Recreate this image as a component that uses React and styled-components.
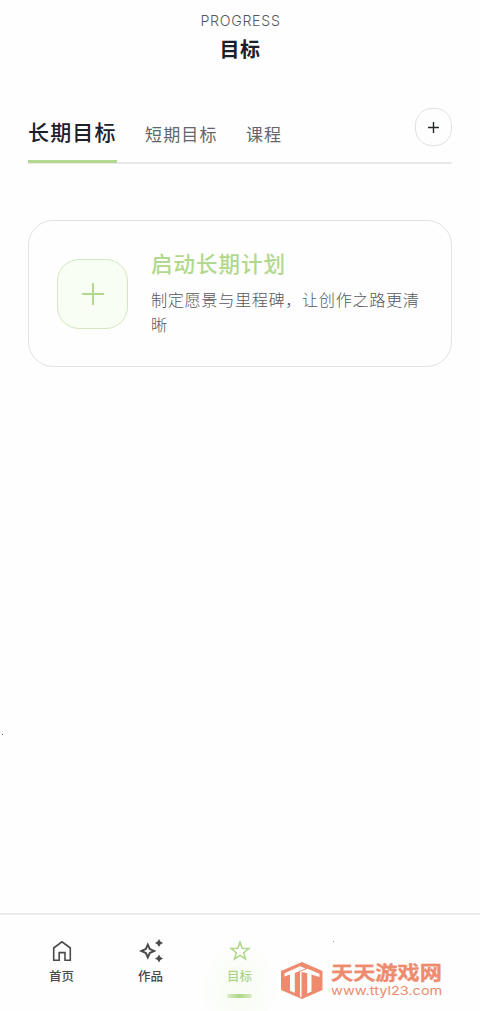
import React from "react";
import styled, { createGlobalStyle } from "styled-components";

const Global = createGlobalStyle`
  * { box-sizing: border-box; }
  body { margin: 0; background: #fefefe; font-family: Inter, "Noto Sans CJK SC", sans-serif; }
  button { font: inherit; padding: 0; background: none; border: 0; }
`;

const Screen = styled.div`
  position: relative;
  width: 480px;
  height: 1011px;
  overflow: hidden;
  display: flex;
  flex-direction: column;
`;

const Header = styled.header`
  height: 108px;
  padding-top: 11px;
  display: flex;
  flex-direction: column;
  align-items: center;
`;

const Eyebrow = styled.div`
  font-size: 14.2px;
  line-height: 20px;
  letter-spacing: 0.7px;
  font-weight: 300;
  color: #55585b;
  margin-right: -1px;
`;

const Title = styled.h1`
  margin: 4px 0 0;
  font-size: 20px;
  line-height: 30px;
  font-weight: 700;
  letter-spacing: 0.6px;
  color: #1b202b;
`;

const Content = styled.main`
  flex: 1;
  padding: 0 28px;
`;

const TabBar = styled.div`
  height: 56px;
  display: flex;
  justify-content: space-between;
  align-items: flex-start;
  border-bottom: 2px solid #e8e9eb;
`;

const Tabs = styled.nav`
  display: flex;
  gap: 28.5px;
  height: 56px;
`;

const Tab = styled.button`
  height: 55px;
  padding-top: ${(p) => (p.$active ? "1px" : "6px")};
  display: flex;
  align-items: center;
  padding-bottom: 8px;
  white-space: nowrap;
  border-bottom: 3px solid ${(p) => (p.$active ? "#b2d98d" : "transparent")};
  font-size: ${(p) => (p.$active ? "21px" : "17px")};
  letter-spacing: ${(p) => (p.$active ? "1.15px" : "1.1px")};
  font-weight: ${(p) => (p.$active ? 500 : 400)};
  color: ${(p) => (p.$active ? "#1b202b" : "#63676b")};
`;

const AddButton = styled.button`
  width: 37px;
  height: 38px;
  border: 1px solid #dfe0e1;
  border-radius: 17px;
  display: grid;
  place-items: center;
`;

const Card = styled.section`
  margin-top: 56px;
  height: 147px;
  border: 1.5px solid #e1e2e3;
  border-radius: 25px;
  padding: 0 28px;
  display: flex;
  align-items: center;
  gap: 23px;
`;

const PlanIcon = styled.div`
  flex: none;
  width: 71px;
  height: 70px;
  border: 1px solid #d3e8c0;
  border-radius: 22px;
  background: #f8fef4;
  display: grid;
  place-items: center;
`;

const PlanCopy = styled.div`
  padding-bottom: 2px;
`;

const PlanTitle = styled.h2`
  margin: 0;
  font-size: 21.5px;
  line-height: 32px;
  font-weight: 500;
  letter-spacing: 1px;
  color: #b1d98d;
`;

const PlanText = styled.p`
  margin: 8px 0 0;
  width: 272px;
  font-size: 16.2px;
  line-height: 24.5px;
  letter-spacing: 0.6px;
  font-weight: 300;
  color: #55595d;
`;

const BottomNav = styled.nav`
  height: 98px;
  border-top: 2px solid #eaebec;
  padding: 0 17px;
  display: flex;
`;

const NavItem = styled.button`
  width: 89px;
  padding-top: 25px;
  display: flex;
  flex-direction: column;
  align-items: center;
  color: ${(p) => (p.$active ? "#add588" : "#484a4b")};
  background: ${(p) =>
    p.$active ? "radial-gradient(ellipse 42px 52px at 50% 78%, #f7fcf2, transparent)" : "none"};
`;

const NavLabel = styled.span`
  margin-top: 6px;
  font-size: 12.5px;
  line-height: 18px;
  font-weight: 500;
`;

const Indicator = styled.span`
  margin-top: 8px;
  width: 25px;
  height: 4px;
  border-radius: 2px;
  background: linear-gradient(90deg, #d9efc7, #acd687 50%, #d9efc7);
`;

const Watermark = styled.aside`
  position: absolute;
  left: 280px;
  top: 961px;
  display: flex;
  gap: 7px;
  color: #ee8b6f;
`;

const SiteName = styled.div`
  font-size: 22.2px;
  line-height: 23px;
  font-weight: 700;
  height: 23px;
  white-space: nowrap;
  transform: scaleY(0.86);
  transform-origin: 0 50%;
  -webkit-text-stroke: 0.4px currentColor;
`;

const SiteUrl = styled.div`
  margin-top: 1px;
  font-family: Inter, sans-serif;
  font-size: 12px;
  line-height: 12px;
  white-space: nowrap;
  width: 92px;
  transform: scaleX(1.21);
  transform-origin: 0 0;
`;

const Speck = styled.i`
  position: absolute;
  left: ${(p) => p.$x}px;
  top: ${(p) => p.$y}px;
  width: 1px;
  height: 1px;
  background: ${(p) => p.$color};
`;

const Plus = ({ size, stroke, color }) => (
  <svg width={size} height={size} viewBox={`0 0 ${size} ${size}`}>
    <path d={`M0 ${size / 2}H${size}M${size / 2} 0V${size}`} stroke={color} strokeWidth={stroke} />
  </svg>
);

const HomeIcon = () => (
  <svg width="22" height="22" viewBox="0 0 22 22" fill="none" stroke="currentColor" strokeWidth="1.6">
    <path d="M2.7 8L11 1.8 19.3 8V20.2H14V12.6H8.2V20.2H2.7Z" />
  </svg>
);

const SparkIcon = () => (
  <svg width="24" height="24" viewBox="0 0 24 24" fill="currentColor" style={{ margin: "-1px 0" }}>
    <path fillRule="evenodd" d="M8.8 3.2L11.5 9.2 17.5 12 11.5 14.8 8.8 20.8 6.1 14.8 0 12 6.1 9.2ZM8.8 8L7.6 10.7 4.8 12 7.6 13.3 8.8 16 10 13.3 12.8 12 10 10.7Z" />
    <path d="M20 0L21.4 2.6 24 4 21.4 5.4 20 8 18.6 5.4 16 4 18.6 2.6ZM20 15.5L21.4 18.1 24 19.5 21.4 20.9 20 23.5 18.6 20.9 16 19.5 18.6 18.1Z" />
  </svg>
);

const StarIcon = () => (
  <svg width="22" height="22" viewBox="0 0 22 22" fill="none" stroke="currentColor" strokeWidth="1.5">
    <path d="M11 2.2L13.2 8.2 19.9 8.5 14.7 12.7 16.5 19.1 11 15.4 5.5 19.1 7.3 12.7 2.1 8.5 8.8 8.2Z" />
  </svg>
);

const Logo = () => (
  <svg width="44" height="39" viewBox="0 0 44 39">
    <path d="M22 1L42.5 10V29L22 38 1 29V10Z" fill="currentColor" />
    <path
      d="M4.5 12.2L20 5.2 25.5 7.4 14.8 12V32L10 29.8V13.5L4.5 15.5ZM20 10.8L27.5 7.8 39.5 12.8V16L31.5 13.5V30.5L27.2 32.4V12.2L21.5 11V36H20Z"
      fill="#fefefe"
    />
  </svg>
);

export default function App() {
  return (
    <>
      <Global />
      <Screen>
        <Header>
          <Eyebrow>PROGRESS</Eyebrow>
          <Title>目标</Title>
        </Header>
        <Content>
          <TabBar>
            <Tabs>
              <Tab $active>长期目标</Tab>
              <Tab>短期目标</Tab>
              <Tab>课程</Tab>
            </Tabs>
            <AddButton aria-label="add">
              <Plus size={11} stroke={1.4} color="#25282b" />
            </AddButton>
          </TabBar>
          <Card>
            <PlanIcon>
              <Plus size={22} stroke={2} color="#b1d98d" />
            </PlanIcon>
            <PlanCopy>
              <PlanTitle>启动长期计划</PlanTitle>
              <PlanText>制定愿景与里程碑，让创作之路更清晰</PlanText>
            </PlanCopy>
          </Card>
        </Content>
        <BottomNav>
          <NavItem>
            <HomeIcon />
            <NavLabel>首页</NavLabel>
          </NavItem>
          <NavItem>
            <SparkIcon />
            <NavLabel>作品</NavLabel>
          </NavItem>
          <NavItem $active>
            <StarIcon />
            <NavLabel>目标</NavLabel>
            <Indicator />
          </NavItem>
        </BottomNav>
        <Watermark>
          <Logo />
          <div>
            <SiteName>天天游戏网</SiteName>
            <SiteUrl>www.ttyl23.com</SiteUrl>
          </div>
        </Watermark>
        <Speck $x={2} $y={734} $color="#7b3a7b" />
        <Speck $x={333} $y={941} $color="#999" />
      </Screen>
    </>
  );
}
